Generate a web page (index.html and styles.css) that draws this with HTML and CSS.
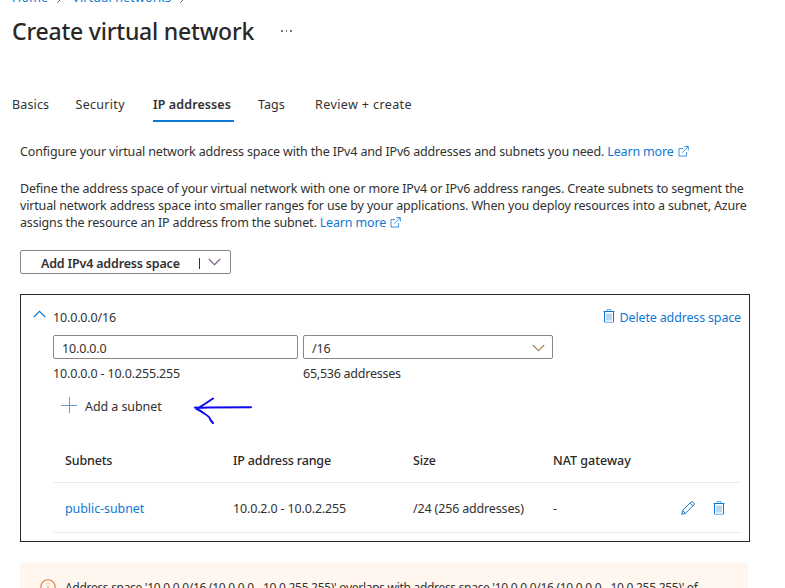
FILE: index.html
```html
<!DOCTYPE html>
<html lang="en">
<head>
<meta charset="utf-8">
<title>Create virtual network</title>
<link rel="stylesheet" href="styles.css">
</head>
<body>
<svg class="defs" width="0" height="0">
  <symbol id="trash" viewBox="0 0 12 14">
    <path d="M.5 2.500h11M1.500 2.500v10.500M10.500 2.500v10.500" fill="none" stroke="currentColor"/>
    <path d="M4 2V.6h4V2M1.500 13.300h9M4 4.500v7M6 4.500v7M8 4.500v7" fill="none" stroke="currentColor" stroke-opacity=".6"/>
  </symbol>
  <symbol id="external" viewBox="0 0 11 11">
    <path d="M5 2.500H1v7.600h7.600V6M6.300.6h4v4M10.200.7 4.200 6.700" fill="none" stroke="currentColor" stroke-width=".8"/>
  </symbol>
  <symbol id="chevron" viewBox="0 0 13 8">
    <path d="M.8 1 6.500 6.700 12.200 1" fill="none" stroke="currentColor" stroke-width="1.100"/>
  </symbol>
</svg>
<nav class="crumbs">
  <a class="crumb-home">Home</a><svg class="sep" viewBox="0 0 6 10"><path d="M.5.500l4.500 4.500-4.500 4.500" fill="none" stroke="currentColor"/></svg>
  <a class="crumb-net">Virtual networks</a><svg class="sep" viewBox="0 0 6 10"><path d="M.5.500l4.500 4.500-4.500 4.500" fill="none" stroke="currentColor"/></svg>
</nav>
<header class="head">
  <h1><span>Create virtual network</span></h1>
  <span class="more"><i></i><i></i><i></i></span>
</header>
<div class="tabs">
  <span class="tab t-basics">Basics</span>
  <span class="tab t-security">Security</span>
  <span class="tab t-ip active">IP addresses</span>
  <span class="tab t-tags">Tags</span>
  <span class="tab t-review">Review + create</span>
</div>
<main>
  <p class="intro">Configure your virtual network address space with the IPv4 and IPv6 addresses and subnets you need. <a>Learn more <svg class="ext"><use href="#external"/></svg></a></p>
  <p class="define">Define the address space of your virtual network with one or more IPv4 or IPv6 address ranges. Create subnets to segment the<br>virtual network address space into smaller ranges for use by your applications. When you deploy resources into a subnet, Azure<br>assigns the resource an IP address from the subnet. <a>Learn more <svg class="ext"><use href="#external"/></svg></a></p>
  <button class="add-space"><span>Add IPv4 address space</span><i class="bar"></i><svg class="chev"><use href="#chevron"/></svg></button>
  <section class="card">
    <div class="card-head">
      <svg class="chev up"><use href="#chevron"/></svg>
      <span class="cidr">10.0.0.0/16</span>
      <a class="delete"><svg class="trash"><use href="#trash"/></svg><span>Delete address space</span></a>
    </div>
    <div class="fields">
      <div class="field"><span>10.0.0.0</span></div>
      <div class="field select"><span>/16</span><svg class="chev"><use href="#chevron"/></svg></div>
      <span class="hint range">10.0.0.0 - 10.0.255.255</span>
      <span class="hint count">65,536 addresses</span>
    </div>
    <div class="add-row">
      <svg class="plus" viewBox="0 0 16 16"><path d="M0 8.500h16" stroke="#6d9ad8"/><path d="M8.500 0v16" stroke="#8c8fd0"/></svg>
      <span class="add-label">Add a subnet</span>
      <svg class="arrow" viewBox="0 0 60 30"><path d="M2 13.500Q8 14.200 14 13.500L58 13.300M20 4.500 11 10.500Q7 13.500 3 14.500Q8 17 12 20Q17 23 17.500 26L20 29" fill="none" stroke="#0d09f2" stroke-width="2" stroke-linecap="round" stroke-linejoin="round"/></svg>
    </div>
    <div class="table">
      <div class="row th"><span>Subnets</span><span>IP address range</span><span>Size</span><span class="nat">NAT gateway</span></div>
      <div class="row td"><a class="name">public-subnet</a><span>10.0.2.0 - 10.0.2.255</span><span>/24 (256 addresses)</span><span>-</span>
        <svg class="pencil" viewBox="0 0 14 14"><path d="M.7 13.300 1.500 9.500 9.900 1.200Q11.200.2 12.500 1.400T12.800 4L4.400 12.400ZM9 2.200 11.800 5M1.700 9.600 4.300 12.200" fill="none" stroke="currentColor"/></svg>
        <svg class="trash"><use href="#trash"/></svg>
      </div>
    </div>
  </section>
  <div class="warning">
    <svg class="info" viewBox="0 0 16 16"><circle cx="8" cy="8" r="7.200" fill="none" stroke="#db7a3d" stroke-width="1.100"/><path d="M8 4v1.200M8 6.500v5.500" stroke="#db7a3d"/></svg>
    <span>Address space '10.0.0.0/16 (10.0.0.0 - 10.0.255.255)' overlaps with address space '10.0.0.0/16 (10.0.0.0 - 10.0.255.255)' of</span>
  </div>
</main>
</body>
</html>
```
FILE: styles.css
```css
* { box-sizing: border-box; }
html, body { height: 588px; overflow: hidden; }
body {
  margin: 0;
  background: #fff;
  color: #323130;
  font: 12.5px/17px "Noto Sans", sans-serif;
  letter-spacing: -.16px;
  white-space: nowrap;
}
svg { display: block; flex: none; }
a { color: #0f78d4; }
p { margin: 0; }
.defs { position: absolute; }
.crumbs { display: flex; height: 17px; margin: -11px 0 0 12px; align-items: center; letter-spacing: .17px; }
.crumbs .sep { width: 6px; height: 10px; margin: 0 9px; color: #605e5c; }
.head { display: flex; height: 50px; padding: 0 0 0 12px; align-items: center; }
h1 { margin: -1px 0 0; width: 269px; font-size: 23px; line-height: 32px; font-weight: 500; color: #292827; letter-spacing: -.2px; }
.more { display: flex; gap: 3px; }
.more i { width: 1.5px; height: 1.5px; background: #777; }
.tabs { display: flex; margin-top: 36px; padding-left: 12px; height: 30px; }
.tab { height: 30px; line-height: 26px; }
.t-basics { width: 63.5px; letter-spacing: .15px; }
.t-security { width: 77.5px; letter-spacing: .3px; }
.t-ip { width: 81px; margin-right: 24px; letter-spacing: .1px; }
.t-tags { width: 57px; letter-spacing: 0; }
.t-review { letter-spacing: .4px; }
.active { font-weight: 600; border-bottom: 2px solid #0f78d4; }
main { padding: 21px 0 0 20px; }
.ext { display: inline-block; width: 11px; height: 11px; vertical-align: -1px; margin-left: 1px; }
.define { margin-top: 20px; }
.add-space {
  display: flex; align-items: center; width: 211px; height: 24px; margin: 19px 0 20px; padding: 2px 9px 0 20px;
  border: 1px solid #8a8886; border-radius: 2px; background: #fff; color: #323130;
  font: 600 12.5px/17px "Noto Sans", sans-serif; letter-spacing: -.18px;
}
.add-space span { width: 158px; text-align: left; }
.bar { width: 1px; height: 11px; background: #323130; margin-right: 8px; }
.chev { width: 13px; height: 8px; color: #775d80; margin-top: -3px; }
.card { width: 730px; height: 248px; border: 1px solid #292827; padding: 12px 8px 0 32px; }
.card-head { display: flex; align-items: center; height: 20px; margin-left: -20px; }
.up { transform: rotate(180deg); color: #0f78d4; margin: -7px 7px 0 0; }
.delete { display: flex; align-items: center; margin-left: auto; gap: 5px; }
.delete .trash { margin-top: -2px; }
.trash { width: 12px; height: 14px; color: #0f78d4; }
.fields { display: grid; grid-template-columns: 245px 250px; column-gap: 5px; margin-top: 8px; }
.field { display: flex; align-items: center; justify-content: space-between; height: 24px; border: 1px solid #8a8886; border-radius: 2px; padding: 2px 7px 0 8px; }
.field .chev { color: #a58555; margin-top: 0; }
.hint { margin-top: 6px; }
.count { letter-spacing: -.25px; }
.add-row { display: flex; align-items: center; height: 30px; margin-top: 9px; padding-left: 8px; }
.plus { width: 16px; height: 16px; margin: -3px 8px 0 0; }
.add-label { width: 108px; letter-spacing: -.08px; }
.arrow { width: 60px; height: 30px; margin-top: 6px; }
.table { margin-top: 17px; }
.row { display: grid; grid-template-columns: 168px 180px 140px 128px 32px 12px; align-items: center; padding-left: 12px; border-bottom: 1px solid #edebe9; }
.th { height: 45px; font-weight: 500; color: #292827; }
.nat { letter-spacing: 0; }
.td { height: 50px; padding-top: 1px; }
.name { letter-spacing: -.08px; }
.pencil { width: 14px; height: 14px; color: #0f78d4; }
.warning { display: flex; width: 728px; height: 60px; margin-top: 20px; padding: 17px 0 0 20px; background: #fff6f0; font-size: 12px; letter-spacing: -.3px; }
.info { width: 16px; height: 16px; margin-right: 9px; }
```
